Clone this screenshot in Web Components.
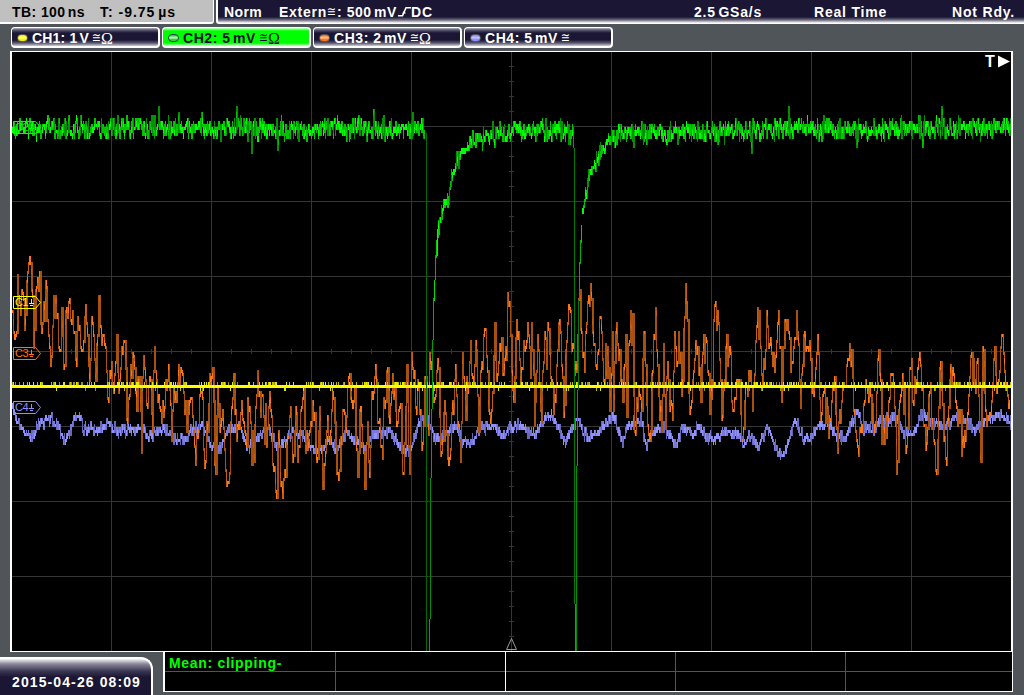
<!DOCTYPE html>
<html lang="en">
<head>
<meta charset="utf-8">
<title>Oscilloscope</title>
<style>
    html, body {
        margin: 0;
        height: 100%;
        overflow: hidden;
        background: #505559;
    }
</style>
</head>
<body>
<osc-screen></osc-screen>

<script>
// Stretches a label to the given width by spreading its letters
class Label extends HTMLElement {
    constructor() {
        super();
        this.root = this.attachShadow({ mode: "open" });
    }

    connectedCallback() {
        this.root.innerHTML = `
            <style>
                :host {
                    display: inline-block;
                    white-space: nowrap;
                    flex: none;
                }
            </style>
            <slot></slot>
        `;
        const width = Number(this.getAttribute("width"));
        const natural = this.getBoundingClientRect().width;
        const count = this.textContent.length;
        this.style.letterSpacing = ((width - natural) / count) + "px";
        this.style.width = width + "px";
    }
}

class Channel extends HTMLElement {
    constructor() {
        super();
        this.root = this.attachShadow({ mode: "open" });
    }

    connectedCallback() {
        const color = this.getAttribute("color");
        const active = this.hasAttribute("active");
        const back = active
            ? "linear-gradient(#c8ffc8 0, #00ff00 3px, #00ff00 15px, #c8ffc8 100%)"
            : "linear-gradient(#b4b2bd 0, #5a5770 2px, #1a1634 5px, #1a1634 12px, #5a5770 15px, #d0ced6 100%)";
        this.root.innerHTML = `
            <style>
                :host {
                    display: flex;
                    align-items: center;
                    box-sizing: border-box;
                    width: 149px;
                    height: 21px;
                    border: 2px solid #fff;
                    border-top-width: 1px;
                    border-left-width: 1px;
                    border-radius: 4px;
                    padding: 1px 0 0 5px;
                    background: ${back};
                    color: ${active ? "#120c30" : "#fff"};
                }

                .led {
                    width: 9px;
                    height: 6px;
                    border: 1px solid ${active ? "#245" : "#555"};
                    border-radius: 5px;
                    background: linear-gradient(${color} 10%, ${this.getAttribute("glow")} 45%, ${color} 75%);
                    margin-right: 4px;
                }

                .coupling {
                    display: flex;
                    padding-left: 3px;
                }
            </style>
            <div class="led"></div>
            <slot></slot>
            <div class="coupling"><slot name="coupling"></slot></div>
        `;
    }
}

// AC/DC coupling and termination signs
class Sign extends HTMLElement {
    constructor() {
        super();
        this.root = this.attachShadow({ mode: "open" });
    }

    connectedCallback() {
        this.root.innerHTML = `
            <style>
                :host {
                    display: inline-block;
                    font: 13px/16px "DejaVu Sans", sans-serif;
                    width: 9px;
                    height: 16px;
                    letter-spacing: 0;
                    flex: none;
                }

                :host([ohm]) {
                    font: 16px/17px "Liberation Serif", serif;
                    width: 13px;
                }

                span {
                    display: inline-block;
                    transform-origin: 0 50%;
                }

                :host(:not([ohm])) span {
                    transform: scaleX(0.84);
                }
            </style>
            <span><slot></slot></span>
        `;
    }
}

class Marker extends HTMLElement {
    constructor() {
        super();
        this.root = this.attachShadow({ mode: "open" });
    }

    connectedCallback() {
        this.root.innerHTML = `
            <style>
                :host {
                    display: block;
                    position: absolute;
                    left: 3px;
                    top: ${this.getAttribute("top")}px;
                    width: 29px;
                    height: 13px;
                    color: ${this.getAttribute("color")};
                    font: 11px/13px "Liberation Sans", sans-serif;
                }

                svg {
                    position: absolute;
                    left: 0;
                    top: 0;
                }

                span {
                    position: absolute;
                    left: 2px;
                    top: 0;
                    letter-spacing: -0.5px;
                }
            </style>
            <svg width="29" height="13" fill="none" stroke="currentColor">
                <path d="M.5 .5H22.5L27.5 6.5 22.5 12.5H.5Z"/>
                <path d="M18.5 3V7M16 7.5H21M17 9.5H20" shape-rendering="crispEdges"/>
            </svg>
            <span><slot></slot></span>
        `;
    }
}

const SVG_VIEW = `width="1003" height="601" viewBox="10 51 1003 601"`;

class Graticule extends HTMLElement {
    constructor() {
        super();
        this.root = this.attachShadow({ mode: "open" });
    }

    connectedCallback() {
        let d = "";
        for (let x = 111; x < 1012; x += 100) d += `M${x} 52h1v600h-1z`;
        for (let y = 126; y < 651; y += 75) d += `M12 ${y}h1000v1h-1000z`;
        for (let x = 31; x < 1011; x += 20) d += `M${x} 349h1v5h-1z`;
        for (let y = 66; y < 650; y += 15) d += `M509 ${y}h5v1h-5z`;
        this.root.innerHTML = `
            <style>
                :host, svg {
                    display: block;
                }
            </style>
            <svg ${SVG_VIEW}><path d="${d}" fill="#353535" shape-rendering="crispEdges"/></svg>
        `;
    }
}

// Key points of each trace, x and y in screen pixels
const TRACES = {
    ch1: {
        shades: ["#e8e800", "#c0c000", "#989800"]
    },
    ch2: {
        shades: ["#00ff00", "#00c400", "#009000"],
        noise: 13,
        tall: 7,
        points: [
            [12, 127], [425, 128]
        ],
        more: [
            [[437, 232], [439, 222], [441, 212], [443, 204], [448, 195], [450, 182], [453, 170], [457, 162],
             [462, 150], [470, 144], [480, 137], [490, 134], [511, 132], [540, 130], [573, 130]],
            [[582, 212], [584, 200], [586, 188], [590, 168], [595, 164], [600, 150], [607, 140], [615, 134],
             [700, 131], [800, 128], [1011, 127]]
        ],
        // columns where the pulse runs out of the screen: x, top, bottom, shade
        bars: [
            [426, 133, 651, "#006c00"], [429, 619, 651, "#00a800"], [430, 478, 619, "#009000"],
            [431, 409, 478, "#00a800"], [432, 340, 409, "#00a000"], [433, 298, 340, "#00b400"],
            [434, 280, 301, "#00e000"], [435, 255, 280, "#00b400"], [436, 240, 258, "#00d000"],
            [437, 232, 256, "#00ff00"], [438, 226, 238, "#00d000"],
            [573, 127, 148, "#00a000"], [574, 148, 604, "#007c00"], [575, 604, 651, "#00b400"],
            [576, 466, 651, "#009000"], [577, 390, 466, "#00a800"], [578, 300, 390, "#007c00"],
            [579, 262, 301, "#00b400"], [580, 240, 264, "#00b400"], [581, 225, 243, "#00d000"]
        ]
    },
    ch3: {
        shades: ["#ff7518", "#c85c10", "#a8500f"],
        noise: 30,
        tall: 10,
        points: [
            [12, 310], [14, 337], [16, 330], [17, 274], [19, 300], [22, 292], [24, 327], [26, 281], [29, 256],
            [31, 290], [33, 345], [36, 285], [39, 271], [41, 330], [43, 300], [45, 280], [48, 335], [50, 363],
            [52, 325], [55, 295], [57, 312], [59, 350], [61, 307], [63, 366], [65, 310], [68, 301], [70, 320],
            [72, 310], [75, 357], [79, 325], [82, 350], [86, 322], [89, 380], [92, 322], [95, 378], [98, 295],
            [100, 325], [105, 345], [108, 401], [111, 360], [113, 390], [116, 334], [118, 390], [121, 345],
            [124, 340], [127, 420], [130, 365], [133, 355], [136, 408], [139, 375], [141, 450], [143, 355],
            [147, 405], [150, 380], [152, 430], [154, 346], [157, 400], [161, 420], [165, 380], [168, 364],
            [171, 440], [174, 400], [179, 385], [182, 373], [184, 412], [186, 430], [190, 398], [193, 430],
            [195, 463], [198, 430], [201, 391], [204, 466], [206, 420], [209, 373], [213, 400], [215, 472],
            [217, 388], [219, 430], [222, 410], [225, 468], [228, 481], [230, 420], [233, 374], [236, 440],
            [241, 400], [244, 430], [248, 410], [253, 459], [257, 370], [260, 415], [262, 394], [266, 445],
            [269, 390], [272, 463], [276, 496], [278, 430], [280, 484], [285, 474], [290, 406], [293, 455],
            [295, 406], [297, 460], [300, 410], [303, 388], [305, 450], [309, 430], [312, 400], [317, 457],
            [319, 406], [322, 486], [327, 415], [330, 430], [332, 391], [335, 445], [339, 469], [342, 410],
            [345, 430], [349, 373], [351, 400], [354, 387], [357, 474], [360, 405], [364, 487], [367, 420],
            [369, 475], [371, 390], [374, 375], [378, 420], [381, 444], [384, 407], [386, 370], [389, 420],
            [392, 373], [396, 425], [400, 403], [403, 472], [406, 364], [409, 472], [411, 352], [413, 375],
            [414, 370], [416, 411], [418, 387], [422, 441], [425, 375], [428, 433], [429, 352], [433, 400],
            [437, 358], [441, 451], [444, 400], [448, 463], [452, 400], [455, 365], [458, 425], [460, 459],
            [462, 352], [465, 417], [469, 362], [472, 375], [475, 340], [478, 430], [481, 360], [483, 335],
            [485, 328], [488, 410], [491, 408], [494, 322], [496, 380], [500, 350], [502, 372], [505, 345],
            [508, 304], [511, 370], [513, 400], [516, 319], [520, 380], [524, 350], [527, 322], [530, 375],
            [531, 322], [534, 424], [537, 333], [540, 410], [543, 360], [548, 328], [551, 380], [553, 412],
            [557, 350], [559, 319], [562, 375], [563, 415], [566, 340], [569, 307], [571, 350], [573, 345],
            [576, 370], [578, 298], [581, 330], [584, 370], [587, 300], [590, 283], [592, 330], [595, 365],
            [598, 350], [600, 316], [603, 380], [607, 345], [609, 410], [612, 330], [613, 410], [615, 331],
            [619, 350], [622, 400], [625, 334], [626, 415], [629, 340], [632, 313], [634, 430], [638, 385],
            [641, 410], [643, 331], [645, 365], [647, 423], [650, 430], [653, 335], [655, 307], [658, 395],
            [661, 430], [663, 343], [665, 428], [667, 360], [670, 400], [672, 418], [674, 330], [677, 360],
            [678, 332], [681, 395], [685, 283], [687, 320], [688, 390], [690, 405], [694, 358], [697, 346],
            [700, 400], [703, 335], [706, 339], [709, 413], [712, 380], [714, 304], [717, 310], [720, 380],
            [721, 417], [726, 335], [729, 345], [732, 410], [736, 380], [739, 379], [741, 440], [744, 400],
            [749, 380], [752, 410], [755, 340], [757, 307], [760, 345], [762, 385], [766, 311], [768, 345],
            [770, 337], [774, 370], [778, 311], [781, 400], [784, 320], [787, 318], [790, 370], [793, 345],
            [795, 337], [797, 332], [800, 405], [804, 331], [807, 345], [810, 358], [813, 395], [815, 368],
            [818, 352], [820, 418], [823, 390], [825, 420], [828, 435], [831, 400], [834, 376], [837, 450],
            [841, 400], [844, 385], [846, 364], [849, 343], [852, 375], [857, 445], [861, 425], [864, 400],
            [867, 390], [870, 395], [874, 425], [877, 358], [880, 380], [881, 442], [886, 435], [891, 373],
            [895, 415], [896, 471], [899, 400], [902, 373], [906, 445], [909, 367], [912, 400], [915, 390],
            [918, 358], [920, 364], [925, 447], [928, 395], [932, 417], [936, 471], [940, 361], [943, 439],
            [946, 463], [949, 380], [952, 367], [956, 405], [958, 410], [962, 435], [966, 418], [968, 395],
            [971, 352], [974, 380], [977, 358], [980, 459], [982, 345], [985, 410], [988, 418], [991, 400],
            [994, 346], [997, 385], [1001, 334], [1004, 370], [1008, 405], [1010, 358]
        ]
    },
    ch4: {
        shades: ["#9090ff", "#7878d8", "#6868b8"],
        noise: 7,
        tall: 5,
        points: [
            [12, 407], [17, 420], [22, 430], [27, 433], [33, 437], [38, 420], [41, 420], [50, 418], [56, 424],
            [63, 437], [70, 430], [74, 416], [80, 414], [83, 428], [95, 429], [107, 424], [118, 430],
            [135, 428], [150, 434], [160, 431], [167, 428], [173, 438], [184, 440], [190, 430], [200, 426],
            [206, 432], [211, 444], [220, 449], [226, 430], [238, 424], [246, 444], [252, 445], [260, 434],
            [268, 426], [276, 447], [284, 442], [290, 432], [302, 434], [312, 447], [322, 447], [328, 436],
            [336, 450], [342, 436], [346, 432], [354, 440], [365, 446], [372, 434], [382, 434], [389, 431],
            [396, 440], [405, 449], [410, 451], [417, 425], [422, 419], [428, 419], [433, 437], [440, 437],
            [450, 427], [456, 424], [462, 441], [470, 444], [480, 427], [495, 426], [500, 434], [510, 427],
            [520, 425], [528, 430], [534, 435], [541, 421], [550, 413], [556, 425], [565, 441], [572, 427],
            [577, 419], [582, 432], [588, 437], [597, 432], [608, 421], [614, 417], [622, 442], [627, 425],
            [640, 419], [646, 445], [652, 432], [663, 425], [676, 445], [683, 424], [692, 434], [698, 425],
            [705, 436], [713, 440], [720, 433], [738, 432], [744, 442], [750, 434], [757, 447], [766, 428],
            [778, 452], [784, 452], [794, 418], [800, 432], [808, 440], [818, 425], [829, 423], [836, 435],
            [845, 437], [855, 412], [858, 412], [862, 428], [868, 426], [874, 430], [880, 418], [893, 418],
            [904, 432], [912, 434], [922, 412], [932, 423], [945, 425], [955, 416], [966, 420], [974, 429],
            [985, 417], [1000, 414], [1011, 422]
        ]
    }
};

class Trace extends HTMLElement {
    constructor() {
        super();
        this.root = this.attachShadow({ mode: "open" });
        this._seed = 7;
    }

    connectedCallback() {
        const trace = TRACES[this.getAttribute("channel")];
        this.$paths = {};

        if (trace.points) {
            [trace.points].concat(trace.more || []).forEach((p) => this.drawNoise(p, trace));
        } else {
            this.drawFlat(trace);
        }
        (trace.bars || []).forEach(([x, top, bottom, color]) => this.bar(x, top, bottom, color));

        // darkest shade first, so that the bright samples stay on top
        const colors = Object.keys(this.$paths).sort();
        const paths = colors.map((color) =>
            `<path fill="${color}" d="${this.$paths[color]}"/>`).join("");
        this.root.innerHTML = `
            <style>
                :host {
                    display: block;
                    position: absolute;
                    left: 0;
                    top: 0;
                }

                svg {
                    display: block;
                }
            </style>
            <svg ${SVG_VIEW} shape-rendering="crispEdges">${paths}</svg>
        `;
    }

    random() {
        this._seed = (this._seed * 16807) % 2147483647;
        return this._seed / 2147483647;
    }

    bar(x, top, bottom, color) {
        this.$paths[color] = (this.$paths[color] || "") + `M${x} ${top}h1V${bottom}h-1z`;
    }

    // one vertical bar for each column, on the 3px steps of the converter
    drawNoise(points, trace) {
        const pulse = trace === TRACES.ch2;
        const loose = trace === TRACES.ch3;
        let last = points[0][1];
        for (let i = 0; i < points.length - 1; i++) {
            const [x0, y0] = points[i];
            const [x1, y1] = points[i + 1];
            for (let x = x0; x < x1; x++) {
                const base = y0 + (y1 - y0) * (x - x0) / (x1 - x0);
                // less jitter on the recovery slopes
                const calm = pulse && base > 145 ? 0.8 : 1;
                const spike = pulse && this.random() > 0.94 ? 2 : 1;
                const onKey = x === x0 && loose;
                const a = (this.random() + this.random() - 1) * trace.noise * calm * spike;
                const b = (this.random() + this.random() - 1) * trace.noise * calm;
                const y = onKey ? base : base + a;
                const other = onKey || loose ? y : base + b;
                const top = Math.floor(Math.min(last, y, other) / 3) * 3 + 1;
                const bottom = Math.floor(Math.max(last, y, other) / 3) * 3 + 4;
                const size = bottom - top;
                const shade = size <= trace.tall ? 0 : size <= trace.tall * 2.2 ? 1 : 2;
                this.bar(x, top, bottom, trace.shades[shade]);
                if (loose && size > 24 && this.random() > 0.6) {
                    this.bar(x + 1, top, bottom, trace.shades[2]);
                }
                // the brightest part of a tall bar is where the samples gather
                if (shade && this.random() > 0.5) {
                    const mid = top + Math.floor(this.random() * (size / 3 - 1)) * 3;
                    this.bar(x, mid, mid + 6, trace.shades[shade - 1]);
                }
                last = y;
            }
        }
    }

    drawFlat(trace) {
        for (let x = 12; x < 1011; x++) {
            this.bar(x, 385, 388, "#ffff00");
            const r = this.random();
            const shade = trace.shades[Math.floor(this.random() * 3)];
            if (r < 0.42) this.bar(x, 382, 385, shade);
            else if (r > 0.94) this.bar(x, 388, 391, shade);
        }
    }
}

class Screen extends HTMLElement {
    constructor() {
        super();
        this.root = this.attachShadow({ mode: "open" });
    }

    connectedCallback() {
        this.root.innerHTML = `
            <style>
                :host {
                    display: flex;
                    flex-direction: column;
                    width: 1024px;
                    height: 695px;
                    overflow: hidden;
                    background: #505559;
                    color: #fff;
                    font: bold 14px/18px "Liberation Sans", sans-serif;
                }

                header {
                    display: flex;
                    height: 24px;
                    flex: none;
                }

                .timebase {
                    display: flex;
                    box-sizing: border-box;
                    width: 214px;
                    height: 24px;
                    padding: 3px 0 0 12px;
                    gap: 16px;
                    background: #c0c0c0;
                    color: #000;
                    border-right: 1px solid #fff;
                    border-bottom: 2px solid #fff;
                    border-bottom-right-radius: 3px;
                }

                .trigger {
                    display: flex;
                    box-sizing: border-box;
                    width: 808px;
                    height: 24px;
                    margin-left: 2px;
                    padding: 3px 0 0 6px;
                    border-left: 2px solid #fff;
                    border-bottom: 1px solid #fff;
                    border-bottom-left-radius: 3px;
                    background: linear-gradient(#1a1634 0, #1a1634 17px, #6f6c80 20px, #fff 23px);
                }

                .edge {
                    flex: none;
                    margin: 2px 0 0 1px;
                }

                i {
                    font-style: normal;
                    word-spacing: -2px;
                }

                .channels {
                    display: flex;
                    gap: 2px;
                    padding: 3px 0 3px 11px;
                    flex: none;
                }

                .plot {
                    position: relative;
                    width: 1003px;
                    height: 601px;
                    margin-left: 10px;
                    background: #000;
                    flex: none;
                }

                .frame {
                    position: absolute;
                    inset: 0;
                    border: solid #fff;
                    border-width: 1px 2px;
                }

                .offset {
                    position: absolute;
                    right: 3px;
                    top: 1px;
                    display: flex;
                    gap: 2px;
                    font: bold 16px/19px "Liberation Sans", sans-serif;
                }

                .position {
                    position: absolute;
                    left: 495px;
                    top: 586px;
                }

                footer {
                    display: flex;
                    height: 43px;
                    flex: none;
                }

                .clock {
                    box-sizing: border-box;
                    width: 153px;
                    height: 38px;
                    margin-top: 5px;
                    padding: 14px 0 0 12px;
                    border-top: 2px solid #fff;
                    border-right: 2px solid #fff;
                    border-top-right-radius: 12px;
                    background: linear-gradient(#f4f4f6 0, #8a8798 5px, #3c3853 12px, #1a1634 18px);
                }

                .results {
                    display: grid;
                    grid-template: 19px 20px / 171px 170px 170px 170px 166px;
                    box-sizing: border-box;
                    width: 850px;
                    height: 40px;
                    margin-left: 10px;
                    border: solid #fff;
                    border-width: 0 1px 1px 2px;
                    background: #000;
                    color: #00ff00;
                }

                .results div {
                    box-sizing: border-box;
                    border-right: 1px solid #555;
                    height: 20px;
                }

                .results div:nth-child(-n+5) {
                    border-bottom: 1px solid #555;
                    padding: 2px 0 0 4px;
                }

                .results div:nth-child(5n+2) {
                    border-right-color: #fff;
                }

                .results div:nth-child(5n) {
                    border-right: none;
                }
            </style>
            <header>
                <div class="timebase">
                    <osc-label width="73">TB: 100<i> </i>ns</osc-label>
                    <osc-label width="76" style="margin-left: -1px">T: -9.75<i> </i>µs</osc-label>
                </div>
                <div class="trigger">
                    <osc-label width="38">Norm</osc-label>
                    <osc-label width="48" style="margin-left: 17px">Extern</osc-label>
                    <osc-sign style="margin-top: 1px">≅</osc-sign>
                    <osc-label width="60" style="margin-left: 1px">: 500<i> </i>mV</osc-label>
                    <svg class="edge" width="13" height="14" fill="none" stroke="#fff" stroke-width="1.6">
                        <path d="M0 10.8H4.5L8 2.8H13"/>
                        <path d="M4 8.5L6.3 5.5L7.8 8.5Z" fill="#fff" stroke="none"/>
                    </svg>
                    <osc-label width="22">DC</osc-label>
                    <osc-label width="68" style="margin-left: 261px">2.5<i> </i>GSa/s</osc-label>
                    <osc-label width="73" style="margin-left: 52px">Real Time</osc-label>
                    <osc-label width="63" style="margin-left: 65px">Not Rdy.</osc-label>
                </div>
            </header>
            <div class="channels">
                <osc-channel color="#f4f000" glow="#ffff90">
                    <osc-label width="57">CH1: 1<i> </i>V</osc-label>
                    <osc-sign slot="coupling">≅</osc-sign><osc-sign slot="coupling" ohm>Ω</osc-sign>
                </osc-channel>
                <osc-channel color="#30d030" glow="#d0ffd0" active>
                    <osc-label width="73">CH2: 5<i> </i>mV</osc-label>
                    <osc-sign slot="coupling">≅</osc-sign><osc-sign slot="coupling" ohm>Ω</osc-sign>
                </osc-channel>
                <osc-channel color="#ff7518" glow="#ffc8a0">
                    <osc-label width="73">CH3: 2<i> </i>mV</osc-label>
                    <osc-sign slot="coupling">≅</osc-sign><osc-sign slot="coupling" ohm>Ω</osc-sign>
                </osc-channel>
                <osc-channel color="#9090ff" glow="#c8c8ff">
                    <osc-label width="73">CH4: 5<i> </i>mV</osc-label>
                    <osc-sign slot="coupling">≅</osc-sign>
                </osc-channel>
            </div>
            <div class="plot">
                <osc-graticule></osc-graticule>
                <osc-marker top="296" color="#ff7518">C3</osc-marker>
                <osc-trace channel="ch4"></osc-trace>
                <osc-trace channel="ch3"></osc-trace>
                <osc-trace channel="ch1"></osc-trace>
                <osc-trace channel="ch2"></osc-trace>
                <osc-marker top="350" color="#9090ff">C4</osc-marker>
                <osc-marker top="245" color="#ffff00">C1</osc-marker>
                <osc-marker top="70" color="#00ff00">C2</osc-marker>
                <svg class="position" width="13" height="14" fill="none" stroke="#999">
                    <path d="M6.5 1.5L11.5 12.5H1.5Z"/>
                </svg>
                <div class="offset">
                    <osc-label width="11">T</osc-label>
                    <svg width="12" height="18"><path d="M0 3.5L12 9.5 0 15.5Z" fill="#fff"/></svg>
                </div>
                <div class="frame"></div>
            </div>
            <footer>
                <div class="clock"><osc-label width="129">2015-04-26 08:09</osc-label></div>
                <div class="results">
                    <div><osc-label width="113">Mean: clipping-</osc-label></div>
                    <div></div><div></div><div></div><div></div>
                    <div></div><div></div><div></div><div></div><div></div>
                </div>
            </footer>
        `;
    }
}

window.customElements.define("osc-label", Label);
window.customElements.define("osc-sign", Sign);
window.customElements.define("osc-channel", Channel);
window.customElements.define("osc-marker", Marker);
window.customElements.define("osc-graticule", Graticule);
window.customElements.define("osc-trace", Trace);
window.customElements.define("osc-screen", Screen);
</script>
</body>
</html>
